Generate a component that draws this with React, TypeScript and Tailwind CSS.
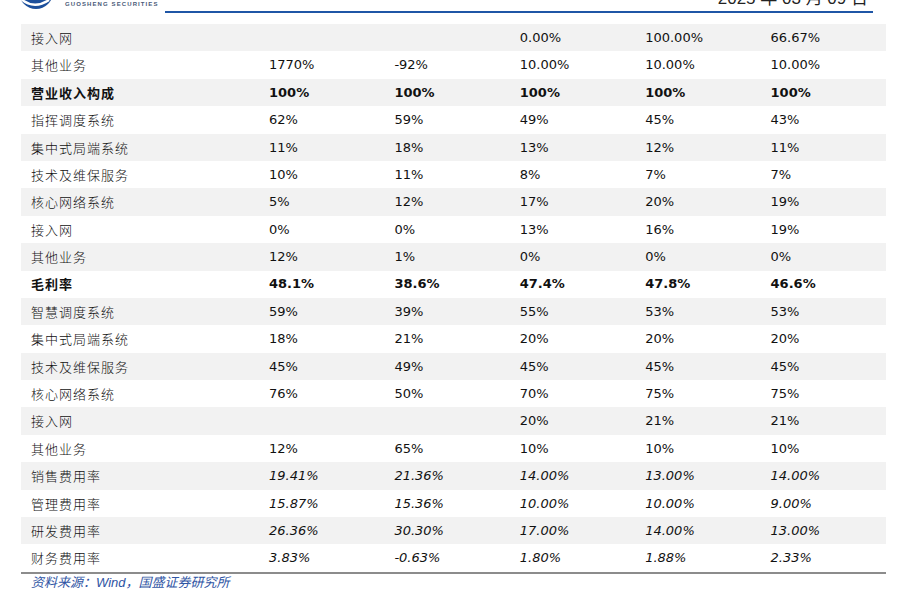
const rows: { label: string; values: string[]; style?: 'bold' | 'italic' }[] = [
  { label: '接入网', values: ['', '', '0.00%', '100.00%', '66.67%'] },
  { label: '其他业务', values: ['1770%', '-92%', '10.00%', '10.00%', '10.00%'] },
  { label: '营业收入构成', values: ['100%', '100%', '100%', '100%', '100%'], style: 'bold' },
  { label: '指挥调度系统', values: ['62%', '59%', '49%', '45%', '43%'] },
  { label: '集中式局端系统', values: ['11%', '18%', '13%', '12%', '11%'] },
  { label: '技术及维保服务', values: ['10%', '11%', '8%', '7%', '7%'] },
  { label: '核心网络系统', values: ['5%', '12%', '17%', '20%', '19%'] },
  { label: '接入网', values: ['0%', '0%', '13%', '16%', '19%'] },
  { label: '其他业务', values: ['12%', '1%', '0%', '0%', '0%'] },
  { label: '毛利率', values: ['48.1%', '38.6%', '47.4%', '47.8%', '46.6%'], style: 'bold' },
  { label: '智慧调度系统', values: ['59%', '39%', '55%', '53%', '53%'] },
  { label: '集中式局端系统', values: ['18%', '21%', '20%', '20%', '20%'] },
  { label: '技术及维保服务', values: ['45%', '49%', '45%', '45%', '45%'] },
  { label: '核心网络系统', values: ['76%', '50%', '70%', '75%', '75%'] },
  { label: '接入网', values: ['', '', '20%', '21%', '21%'] },
  { label: '其他业务', values: ['12%', '65%', '10%', '10%', '10%'] },
  { label: '销售费用率', values: ['19.41%', '21.36%', '14.00%', '13.00%', '14.00%'], style: 'italic' },
  { label: '管理费用率', values: ['15.87%', '15.36%', '10.00%', '10.00%', '9.00%'], style: 'italic' },
  { label: '研发费用率', values: ['26.36%', '30.30%', '17.00%', '14.00%', '13.00%'], style: 'italic' },
  { label: '财务费用率', values: ['3.83%', '-0.63%', '1.80%', '1.88%', '2.33%'], style: 'italic' },
];

function Logo() {
  return (
    <svg width="40" height="10" viewBox="0 0 40 10" className="block">
      <circle cx="18" cy="-8" r="17" fill="#1c4f9c" />
      <path d="M3 -1 Q 16 10 31 0" stroke="#fff" strokeWidth="2.4" fill="none" />
    </svg>
  );
}

export default function App() {
  return (
    <div className="w-[898px] h-[596px] bg-white overflow-hidden text-[#111]">
      {/* header */}
      <div className="flex items-start h-[24px] pl-[18px] pr-[25px]">
        <Logo />
        <div className="ml-[7px] mt-[1px] text-[6px] leading-[7px] tracking-[1.1px] text-[#4a5a78] font-['Liberation_Sans',sans-serif] font-bold">
          GUOSHENG SECURITIES
        </div>
        <div className="flex-1 ml-[6px] h-[13px] border-b-2 border-[#1f56a6] text-right pr-[5px]">
          <div className="-mt-[11px] text-[17px] leading-[20px] text-[#222] font-['Liberation_Sans','Noto_Sans_CJK_SC',sans-serif]">
            2025 年 03 月 09 日
          </div>
        </div>
      </div>

      {/* table */}
      <div className="ml-[21px] w-[865px] border-b-2 border-[#8c8c8c]">
        {rows.map((r, i) => (
          <div
            key={i}
            className={`flex items-center h-[27.4px] ${i % 2 === 0 ? 'bg-[#f2f2f2]' : 'bg-white'}`}
          >
            <div
              className={`w-[238px] pl-[10px] text-[13px] tracking-[1px] font-['Noto_Sans_CJK_SC',sans-serif] ${
                r.style === 'bold' ? 'font-bold' : 'font-light'
              }`}
            >
              {r.label}
            </div>
            {r.values.map((v, j) => (
              <div
                key={j}
                className={`w-[125.4px] pl-[10px] text-[13px] font-['DejaVu_Sans',sans-serif] ${
                  r.style === 'bold' ? 'font-bold' : ''
                } ${r.style === 'italic' ? 'italic' : ''}`}
              >
                {v}
              </div>
            ))}
          </div>
        ))}
      </div>

      <div className="ml-[31px] mt-[1px] text-[13px] leading-[15px] italic text-[#2f55a4] font-['Liberation_Sans','Noto_Sans_CJK_SC',sans-serif]">
        资料来源：Wind，国盛证券研究所
      </div>
    </div>
  );
}
